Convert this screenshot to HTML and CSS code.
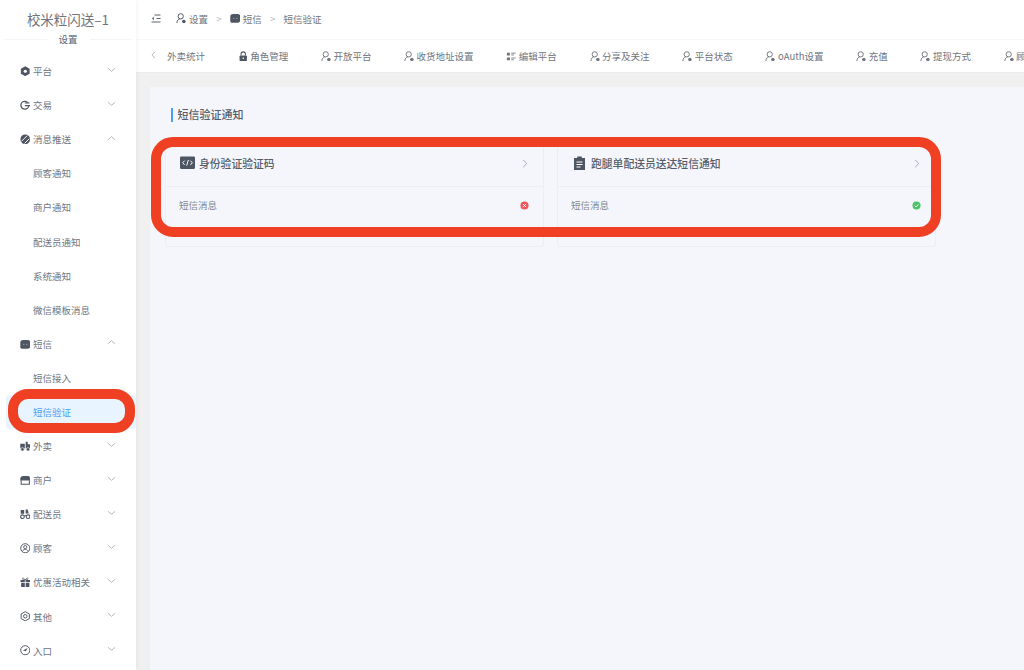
FILE: index.html
```html
<!DOCTYPE html>
<html lang="zh-CN">
<head>
<meta charset="utf-8">
<title>短信验证</title>
<link rel="stylesheet" href="styles.css">
</head>
<body>
<svg class="defs" width="0" height="0" aria-hidden="true">
  <symbol id="i-person" viewBox="0 0 12 12"><circle cx="5.400" cy="3.800" r="3" fill="none" stroke="currentColor" stroke-width="1.100"/><path d="M1 11.500c.1-2.800 1.600-4.600 3.400-4.800" fill="none" stroke="currentColor" stroke-width="1.100"/><circle cx="9" cy="9.600" r="2" fill="currentColor"/></symbol>
  <symbol id="i-chat" viewBox="0 0 12 12"><path d="M3.500 1h5A3.200 3.200 0 0 1 11.700 4.200v4A2.800 2.800 0 0 1 8.900 11H2A1.700 1.700 0 0 1 .3 9.300V4.200A3.200 3.200 0 0 1 3.500 1z" fill="currentColor"/><circle cx="4.300" cy="6.200" r=".7" fill="#9ba0a9"/><circle cx="7.700" cy="6.200" r=".7" fill="#9ba0a9"/></symbol>
  <symbol id="i-lock" viewBox="0 0 12 12"><path d="M3.500 5V3.500a2.500 2.500 0 0 1 5 0V5" fill="none" stroke="currentColor" stroke-width="1.200"/><rect x="1.800" y="5" width="8.400" height="6.500" rx="1" fill="currentColor"/><circle cx="6" cy="8.200" r=".9" fill="#fff"/></symbol>
  <symbol id="i-list" viewBox="0 0 12 12"><path d="M1 2h3.500v3H1zM1 7.500h3.500v3H1z" fill="currentColor"/><path d="M6 2.500h5M6 4.500h3M6 8h5M6 10h3" stroke="currentColor" stroke-width="1"/></symbol>
  <symbol id="i-gear" viewBox="0 0 12 12"><path d="M6 .4l5 2.800v5.600l-5 2.800-5-2.800V3.200z" fill="currentColor"/><circle cx="6" cy="6" r="1.800" fill="#fff"/></symbol>
  <symbol id="i-pie" viewBox="0 0 12 12"><circle cx="5.500" cy="6" r="4.500" fill="none" stroke="currentColor" stroke-width="1.500"/><path d="M5 3.300h6.500v3.200H5z" fill="#fff"/><path d="M5.500 3.400h5.300M5.500 6.400h6" stroke="currentColor" stroke-width="1.300"/></symbol>
  <symbol id="i-bell" viewBox="0 0 12 12"><circle cx="6" cy="6" r="5.500" fill="currentColor"/><path d="M1.800 8.300L8.300 1.800M5.200 10.800L10.800 5.200" stroke="#fff" stroke-width="1.100"/></symbol>
  <symbol id="i-truck" viewBox="0 0 12 12"><path d="M.3 3h5.200v5.500H.3zM6.500.8h2.300v3h2.900v4.700H6.500z" fill="currentColor"/><circle cx="2.800" cy="9.500" r="2" fill="currentColor" stroke="#fff" stroke-width=".7"/><circle cx="9.200" cy="9.500" r="2" fill="currentColor" stroke="#fff" stroke-width=".7"/></symbol>
  <symbol id="i-shop" viewBox="0 0 12 12"><path d="M3.200 1.200h5.600a3 3 0 0 1 2.900 2.800V6.300H.3V4a3 3 0 0 1 2.900-2.800z" fill="currentColor"/><path d="M1.300 6v4.600h9.400V6" fill="none" stroke="currentColor" stroke-width="1.200"/></symbol>
  <symbol id="i-bike" viewBox="0 0 12 12"><path d="M.8 1h4v4.500h-4zM6.500.5h2.300l1.200 4.500H6.500z" fill="currentColor"/><circle cx="2.800" cy="8.800" r="2.100" fill="none" stroke="currentColor" stroke-width="1.300"/><circle cx="9.200" cy="8.800" r="2.100" fill="none" stroke="currentColor" stroke-width="1.300"/><path d="M5 7.500h2" stroke="currentColor"/></symbol>
  <symbol id="i-user" viewBox="0 0 12 12"><circle cx="6" cy="6" r="5.200" fill="none" stroke="currentColor" stroke-width="1.100"/><circle cx="6" cy="4.700" r="1.800" fill="none" stroke="currentColor"/><path d="M2.800 9.500c.7-1.600 1.800-2.200 3.200-2.200s2.500.6 3.200 2.200" fill="none" stroke="currentColor"/></symbol>
  <symbol id="i-gift" viewBox="0 0 12 12"><path d="M.6 3.500h4.900v2.300H.6zM6.500 3.500h4.900v2.300H6.500zM1.300 6.700h4.200v4.800H1.300zM6.500 6.700h4.200v4.800H6.500z" fill="currentColor"/><path d="M6 3.300C4.500 1 2.800.8 2.800 2S4.500 3.300 6 3.300C7.500 3.300 9.200 3.200 9.200 2S7.500 1 6 3.300z" fill="none" stroke="currentColor" stroke-width=".9"/></symbol>
  <symbol id="i-hex" viewBox="0 0 12 12"><path d="M6 .7l4.700 2.700v5.200L6 11.300 1.300 8.600V3.400z" fill="none" stroke="currentColor" stroke-width="1.100"/><circle cx="6" cy="6" r="2" fill="none" stroke="currentColor" stroke-width="1.100"/></symbol>
  <symbol id="i-compass" viewBox="0 0 12 12"><circle cx="6" cy="6" r="5.200" fill="none" stroke="currentColor" stroke-width="1.100"/><path d="M8.700 3.300L6.800 7.200 3.300 6.300z" fill="currentColor"/></symbol>
  <symbol id="i-down" viewBox="0 0 10 6"><path d="M1 1l4 3.500L9 1" fill="none" stroke="currentColor" stroke-width=".9"/></symbol>
  <symbol id="i-up" viewBox="0 0 10 6"><path d="M1 5l4-3.500L9 5" fill="none" stroke="currentColor" stroke-width=".9"/></symbol>
</svg>

<div class="app">
  <aside class="sidebar">
    <div class="brand">校米粒闪送–1</div>
    <div class="brand-divider"><span>设置</span></div>
    <nav class="menu">
      <a class="item"><svg class="ic"><use href="#i-gear"/></svg><span>平台</span><svg class="arrow"><use href="#i-down"/></svg></a>
      <a class="item"><svg class="ic"><use href="#i-pie"/></svg><span>交易</span><svg class="arrow"><use href="#i-down"/></svg></a>
      <a class="item"><svg class="ic"><use href="#i-bell"/></svg><span>消息推送</span><svg class="arrow"><use href="#i-up"/></svg></a>
      <a class="item sub">顾客通知</a>
      <a class="item sub">商户通知</a>
      <a class="item sub">配送员通知</a>
      <a class="item sub">系统通知</a>
      <a class="item sub">微信模板消息</a>
      <a class="item"><svg class="ic"><use href="#i-chat"/></svg><span>短信</span><svg class="arrow"><use href="#i-up"/></svg></a>
      <a class="item sub">短信接入</a>
      <a class="item sub active">短信验证</a>
      <a class="item"><svg class="ic"><use href="#i-truck"/></svg><span>外卖</span><svg class="arrow"><use href="#i-down"/></svg></a>
      <a class="item"><svg class="ic"><use href="#i-shop"/></svg><span>商户</span><svg class="arrow"><use href="#i-down"/></svg></a>
      <a class="item"><svg class="ic"><use href="#i-bike"/></svg><span>配送员</span><svg class="arrow"><use href="#i-down"/></svg></a>
      <a class="item"><svg class="ic"><use href="#i-user"/></svg><span>顾客</span><svg class="arrow"><use href="#i-down"/></svg></a>
      <a class="item"><svg class="ic"><use href="#i-gift"/></svg><span>优惠活动相关</span><svg class="arrow"><use href="#i-down"/></svg></a>
      <a class="item"><svg class="ic"><use href="#i-hex"/></svg><span>其他</span><svg class="arrow"><use href="#i-down"/></svg></a>
      <a class="item"><svg class="ic"><use href="#i-compass"/></svg><span>入口</span><svg class="arrow"><use href="#i-down"/></svg></a>
    </nav>
  </aside>

  <main class="main">
    <header class="topbar">
      <svg class="fold" viewBox="0 0 10 9"><path d="M3.500 1h6M5.500 4.500h4M.5 8h9" stroke="currentColor" stroke-width="1" fill="none"/><path d="M2.800 2.500L1 4.500l1.800 2z" fill="currentColor"/></svg>
      <div class="crumbs">
        <svg class="crumb-ic"><use href="#i-person"/></svg><span>设置</span><i>&gt;</i>
        <svg class="crumb-ic"><use href="#i-chat"/></svg><span>短信</span><i>&gt;</i>
        <span>短信验证</span>
      </div>
    </header>

    <div class="tabs">
      <svg class="tabs-back" viewBox="0 0 6 10"><path d="M5 1L1 5l4 4" fill="none" stroke="currentColor" stroke-width=".9"/></svg>
      <div class="tab-list">
        <a class="tab">外卖统计</a>
        <a class="tab"><svg class="tab-ic solid"><use href="#i-lock"/></svg>角色管理</a>
        <a class="tab"><svg class="tab-ic"><use href="#i-person"/></svg>开放平台</a>
        <a class="tab"><svg class="tab-ic"><use href="#i-person"/></svg>收货地址设置</a>
        <a class="tab"><svg class="tab-ic"><use href="#i-list"/></svg>编辑平台</a>
        <a class="tab"><svg class="tab-ic"><use href="#i-person"/></svg>分享及关注</a>
        <a class="tab"><svg class="tab-ic"><use href="#i-person"/></svg>平台状态</a>
        <a class="tab"><svg class="tab-ic"><use href="#i-person"/></svg>oAuth设置</a>
        <a class="tab"><svg class="tab-ic"><use href="#i-person"/></svg>充值</a>
        <a class="tab"><svg class="tab-ic"><use href="#i-person"/></svg>提现方式</a>
        <a class="tab"><svg class="tab-ic"><use href="#i-person"/></svg>顾客设置</a>
      </div>
    </div>

    <div class="content">
      <section class="panel">
        <h2 class="section-title">短信验证通知</h2>
        <div class="cards">
          <article class="card">
            <div class="card-head">
              <svg class="card-ic" viewBox="0 0 14 12"><rect width="14" height="11.500" rx="1" fill="currentColor"/><path d="M4.300 3.800L2.500 5.800l1.800 2M9.700 3.800l1.800 2-1.800 2M7.800 3.200L6.200 8.400" fill="none" stroke="#fff" stroke-width=".9"/></svg>
              <h3>身份验证验证码</h3>
              <svg class="card-arrow" viewBox="0 0 6 10"><path d="M1 1l4 4-4 4" fill="none" stroke="currentColor" stroke-width=".9"/></svg>
            </div>
            <div class="card-row">
              <span>短信消息</span>
              <svg class="status" viewBox="0 0 10 10"><circle cx="5" cy="5" r="4.500" fill="#ec5a5e"/><path d="M3.400 3.400l3.200 3.200M6.600 3.400L3.400 6.600" stroke="#fff" stroke-width="1"/></svg>
            </div>
          </article>
          <article class="card">
            <div class="card-head">
              <svg class="card-ic" viewBox="0 0 14 14"><path d="M1.500 2h3.200V.6h4.600V2h3.200v12h-11z" fill="currentColor"/><path d="M4 6h6M4 8.500h6M4 11h4" stroke="#fff" stroke-width="1"/></svg>
              <h3>跑腿单配送员送达短信通知</h3>
              <svg class="card-arrow" viewBox="0 0 6 10"><path d="M1 1l4 4-4 4" fill="none" stroke="currentColor" stroke-width=".9"/></svg>
            </div>
            <div class="card-row">
              <span>短信消息</span>
              <svg class="status" viewBox="0 0 10 10"><circle cx="5" cy="5" r="4.500" fill="#4cc468"/><path d="M3 5.100l1.500 1.500L7.100 3.900" fill="none" stroke="#fff" stroke-width="1"/></svg>
            </div>
          </article>
        </div>
      </section>
    </div>
  </main>
</div>

<div class="mark mark-cards"></div>
<div class="mark mark-menu"></div>
</body>
</html>
```

FILE: styles.css
```css
* { box-sizing: border-box; }
html, body { margin: 0; height: 100%; overflow: hidden; }
body {
  position: relative;
  width: 1024px;
  height: 670px;
  font-family: "Noto Sans CJK SC", "Noto Sans", sans-serif;
  color: #6b7280;
  background: #f0f0f0;
}
.defs { position: absolute; }
.app { display: flex; height: 670px; }

/* sidebar */
.sidebar {
  width: 136px;
  flex: none;
  background: #fff;
  box-shadow: 1px 0 4px rgba(0, 0, 0, .05);
  z-index: 1;
}
.brand {
  height: 32px;
  padding-top: 9px;
  font-size: 13.500px;
  line-height: 20px;
  color: #6f747c;
  text-align: center;
}
.brand-divider {
  display: flex;
  align-items: center;
  gap: 12px;
  height: 14px;
  margin: 0 5px 8px;
  font-size: 9.500px;
  color: #5d6470;
}
.brand-divider::before,
.brand-divider::after {
  content: "";
  flex: 1;
  height: 1px;
  background: #f5f5f6;
}
.menu { display: flex; flex-direction: column; }
.item {
  display: flex;
  align-items: center;
  height: 34.100px;
  padding-left: 19.500px;
  font-size: 9.500px;
  color: #70767f;
}
.ic { width: 10.500px; height: 10.500px; margin-right: 3px; color: #4f5663; flex: none; }
.arrow { width: 9px; height: 6px; margin-left: auto; margin-right: 20px; margin-top: -3px; color: #a5a9b0; flex: none; }
.item.sub { padding-left: 33px; }
.item.active {
  margin-left: 6px;
  padding-left: 27px;
  background: #e8f4ff;
  border-radius: 4px;
  color: #4a9ff5;
}

/* main */
.main { flex: 1; min-width: 0; display: flex; flex-direction: column; }
.topbar {
  display: flex;
  align-items: center;
  height: 40px;
  padding: 0 0 2px 15px;
  background: #fff;
  border-bottom: 1px solid #f8f8f9;
  font-size: 9.500px;
  color: #6f7580;
}
.fold { width: 10px; height: 9px; margin-right: 15px; color: #5c6370; flex: none; }
.crumbs { display: flex; align-items: center; }
.crumbs i { width: 21.700px; text-align: center; font-style: normal; color: #b4b8be; }
.crumb-ic { width: 10.500px; height: 10.500px; margin-right: 2.500px; color: #4f5663; flex: none; }
.tabs {
  display: flex;
  align-items: center;
  height: 33px;
  padding-left: 15px;
  background: #fff;
  border-bottom: 1px solid #ececec;
  overflow: hidden;
}
.tabs-back { width: 5px; height: 8px; margin: -3px 11px 0 0; color: #9aa0a8; flex: none; }
.tab-list { display: flex; gap: 32.700px; }
.tab {
  display: flex;
  align-items: center;
  flex: none;
  font-size: 9.500px;
  color: #6f7580;
  white-space: nowrap;
}
.tab-ic { width: 10.500px; height: 10.500px; margin-right: 2px; color: #70767f; flex: none; }
.tab-ic.solid { color: #4f5663; }

/* content */
.content { flex: 1; padding: 14px 0 0 14px; background: #f0f0f0; min-height: 0; }
.panel { height: 100%; padding: 21px 0 0 15px; background: #f5f6fb; }
.section-title {
  height: 14px;
  margin: 0 0 20px 6px;
  padding-left: 4.500px;
  border-left: 2.500px solid #4a9ff5;
  font-size: 11px;
  font-weight: 500;
  line-height: 13px;
  color: #565d69;
}
.cards { display: flex; gap: 13.500px; }
.card {
  width: 378.500px;
  height: 105px;
  border: 1px solid #eceef3;
  border-radius: 3px;
}
.card-head {
  display: flex;
  align-items: center;
  height: 44px;
  padding: 0 15.500px 3px 14px;
  border-bottom: 1px solid #eceef3;
  color: #4f5663;
}
.card-ic { width: 15px; height: 14px; margin-right: 4px; flex: none; }
.card-head h3 {
  margin: 0;
  font-size: 10.800px;
  font-weight: 500;
  color: #565d69;
}
.card-arrow { width: 6px; height: 9px; margin-left: auto; margin-right: -.5px; color: #8f959e; flex: none; }
.card-row {
  display: flex;
  align-items: center;
  justify-content: space-between;
  height: 38px;
  padding: 0 14px 2px 13px;
  font-size: 9.500px;
  color: #80868f;
}
.status { width: 9px; height: 9px; flex: none; }

/* annotation marks drawn over the page */
.mark {
  position: absolute;
  z-index: 5;
  border: 10.500px solid #ef4023;
  pointer-events: none;
}
.mark-cards { left: 151px; top: 137px; width: 790px; height: 100px; border-radius: 22px; }
.mark-menu { left: 8px; top: 389px; width: 127px; height: 44px; border-radius: 20px; }
```
